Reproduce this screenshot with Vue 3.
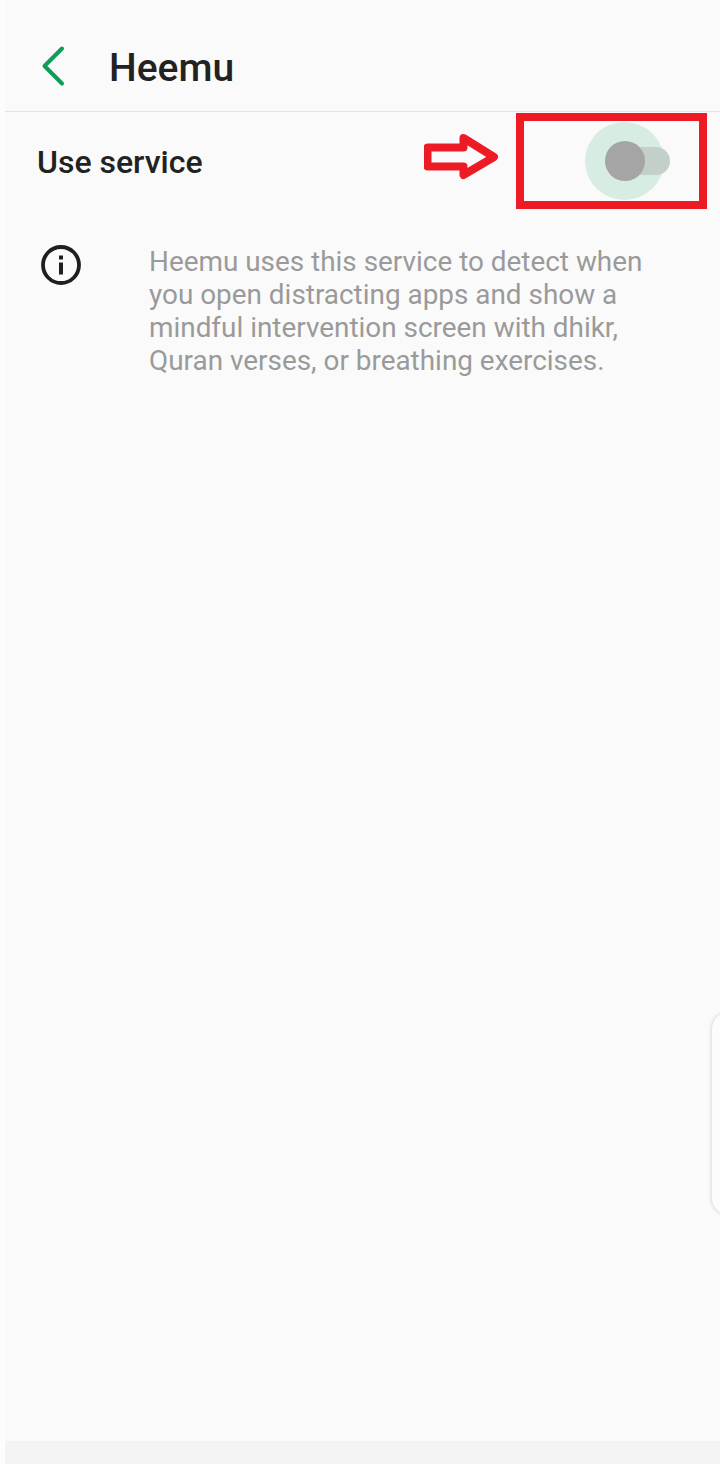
<script setup>
const lines = [
  'Heemu uses this service to detect when',
  'you open distracting apps and show a',
  'mindful intervention screen with dhikr,',
  'Quran verses, or breathing exercises.'
]
</script>

<template>
  <div class="page">
    <div class="screen">
      <header class="header">
        <svg class="back" width="26" height="42" viewBox="0 0 26 42" fill="none">
          <path d="M22 3.5 L4.5 21 L22 38.5" stroke="#0e9d58" stroke-width="4" stroke-linecap="round" stroke-linejoin="round" />
        </svg>
        <h1 class="title">Heemu</h1>
      </header>
      <section class="row">
        <span class="label">Use service</span>
        <div class="switch">
          <span class="halo"></span>
          <span class="track"></span>
          <span class="thumb"></span>
        </div>
      </section>
      <section class="info">
        <svg class="info-icon" width="40" height="40" viewBox="0 0 40 40" fill="none">
          <circle cx="20" cy="20" r="18" stroke="#1f1f1f" stroke-width="3.8" />
          <rect x="18" y="10.5" width="4" height="4" fill="#1f1f1f" />
          <rect x="18" y="17.5" width="4" height="12" fill="#1f1f1f" />
        </svg>
        <p class="desc">
          <span v-for="line in lines" :key="line" class="line">{{ line }}</span>
        </p>
      </section>
      <div class="spacer"></div>
      <footer class="footer"></footer>
    </div>

    <svg class="arrow" width="76" height="48" viewBox="0 0 76 48" fill="none">
      <path d="M3.5 14.5 H39.5 V5 L70 24 L39.5 42 V33.5 H3.5 Z" fill="#fafafa" stroke="#ed1c24" stroke-width="8" stroke-linejoin="round" />
    </svg>
    <div class="highlight"></div>
    <div class="edge-panel"></div>
  </div>
</template>

<style>
html, body { margin: 0; background: #fdfdfd; }
</style>

<style scoped>
.page {
  position: relative;
  width: 720px;
  height: 1464px;
  overflow: hidden;
  background: #fdfdfd;
  font-family: Roboto, "Liberation Sans", sans-serif;
}
.screen {
  display: flex;
  flex-direction: column;
  height: 100%;
  margin-left: 5px;
  background: #fafafa;
}
.header {
  display: flex;
  align-items: center;
  gap: 43px;
  height: 112px;
  box-sizing: border-box;
  padding: 24px 0 0 35px;
  border-bottom: 1px solid #e4e4e4;
}
.back { flex: none; margin-bottom: 4px; }
.title {
  margin: 0;
  font-size: 39px;
  font-weight: 500;
  color: #222;
}
.row {
  display: flex;
  align-items: center;
  justify-content: space-between;
  height: 100px;
  padding: 0 31px 0 32px;
}
.label {
  font-size: 32px;
  font-weight: 500;
  color: #222;
}
.switch {
  position: relative;
  width: 84px;
  height: 80px;
}
.halo {
  position: absolute;
  left: -20px;
  top: 0;
  width: 79px;
  height: 78px;
  border-radius: 50%;
  background: #d7ece2;
}
.track {
  position: absolute;
  left: 20px;
  top: 25px;
  width: 45px;
  height: 28px;
  border-radius: 14px;
  background: #c3cfc9;
}
.thumb {
  position: absolute;
  left: 0;
  top: 19px;
  width: 40px;
  height: 40px;
  border-radius: 50%;
  background: #a5a5a5;
}
.info {
  display: flex;
  align-items: flex-start;
  padding: 33px 0 0 36px;
}
.info-icon { flex: none; }
.desc {
  margin: 0 0 0 68px;
  font-size: 27.9px;
  line-height: 33px;
  color: #9a9a9a;
}
.line { display: block; white-space: nowrap; }
.spacer { flex: 1; }
.footer {
  height: 23px;
  background: #f4f4f4;
}
.arrow {
  position: absolute;
  left: 424px;
  top: 133px;
}
.highlight {
  position: absolute;
  left: 516px;
  top: 113px;
  width: 191px;
  height: 96px;
  box-sizing: border-box;
  border: 8px solid #ed1c24;
}
.edge-panel {
  position: absolute;
  left: 711px;
  top: 1011px;
  width: 40px;
  height: 205px;
  box-sizing: border-box;
  border-radius: 18px;
  background: #fcfcfc;
  border: 1px solid #e6e6e6;
  box-shadow: -1px 0 3px rgba(0, 0, 0, 0.08);
}
</style>
